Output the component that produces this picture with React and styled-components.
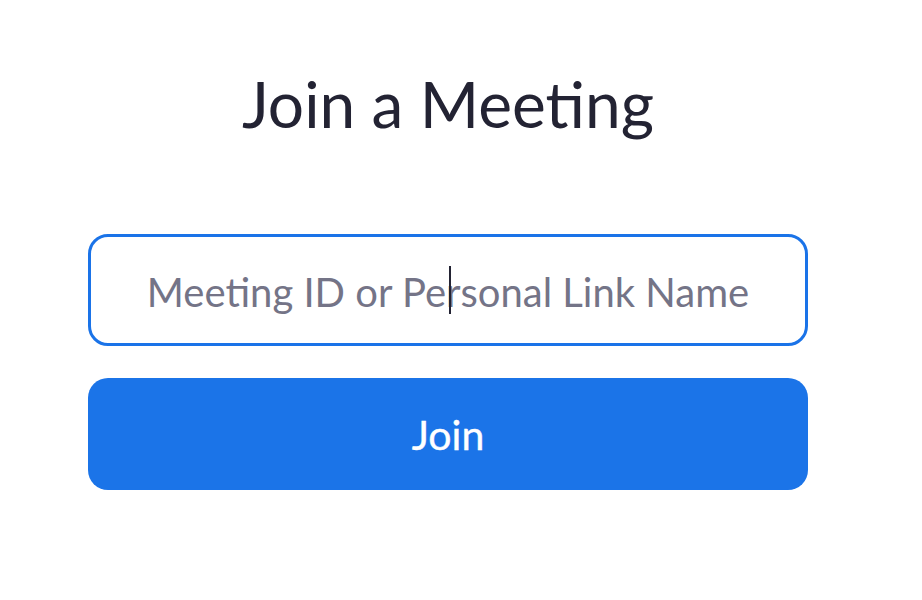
import React from "react";
import styled, { createGlobalStyle } from "styled-components";

const Global = createGlobalStyle`
  html, body { margin: 0; padding: 0; background: #ffffff; }
  body { font-family: Lato, "Open Sans", sans-serif; }
`;

const Page = styled.div`
  width: 922px;
  height: 600px;
  box-sizing: border-box;
  padding: 65px 0 0 88px;
  background: #ffffff;
`;

const Column = styled.div`
  width: 720px;
  display: flex;
  flex-direction: column;
  align-items: stretch;
`;

const Title = styled.h1`
  margin: 0;
  font-family: Lato, sans-serif;
  font-weight: 400;
  font-size: 64px;
  line-height: 77px;
  color: #232333;
  text-align: center;
`;

const Field = styled.div`
  position: relative;
  margin-top: 92px;
  height: 112px;
  box-sizing: border-box;
  border: 3px solid #1a73e8;
  border-radius: 20px;
  display: flex;
  align-items: center;
  justify-content: center;
`;

const Placeholder = styled.span`
  font-family: Lato, sans-serif;
  font-size: 40px;
  color: #747487;
  line-height: 1;
  padding-top: 3px;
`;

const Caret = styled.span`
  position: absolute;
  left: 358px;
  top: 29px;
  width: 2px;
  height: 48px;
  background: #232333;
`;

const JoinButton = styled.button`
  margin-top: 32px;
  height: 112px;
  border: none;
  border-radius: 20px;
  background: #1b74e8;
  color: #ffffff;
  font-family: Lato, sans-serif;
  font-size: 41px;
  padding: 0;
  cursor: pointer;
  -webkit-text-stroke: 0.4px #ffffff;
`;

export default function App() {
  return (
    <>
      <Global />
      <Page>
        <Column>
          <Title>Join a Meeting</Title>
          <Field>
            <Placeholder>Meeting ID or Personal Link Name</Placeholder>
            <Caret />
          </Field>
          <JoinButton>Join</JoinButton>
        </Column>
      </Page>
    </>
  );
}
